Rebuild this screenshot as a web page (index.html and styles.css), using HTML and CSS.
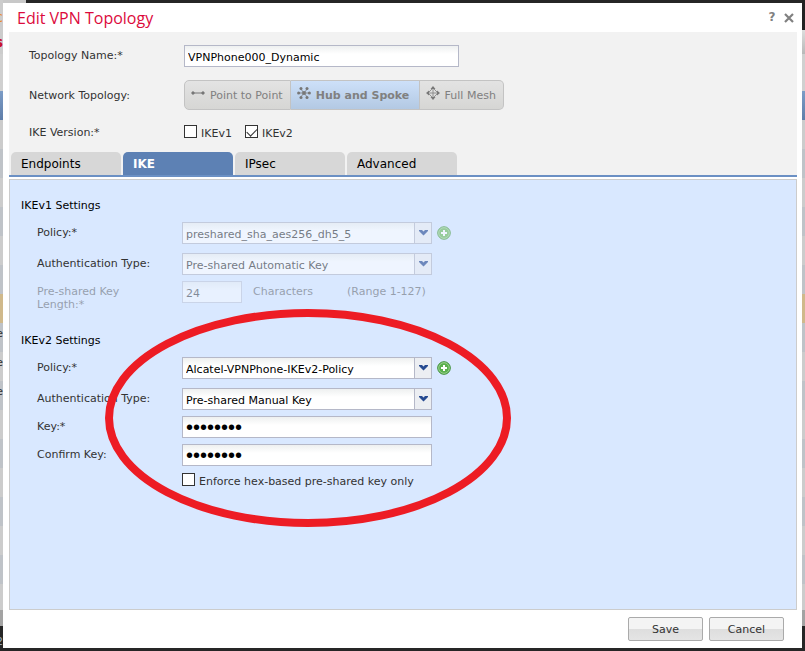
FILE: index.html
```html
<!DOCTYPE html>
<html lang="en">
<head>
<meta charset="utf-8">
<title>Edit VPN Topology</title>
<link rel="stylesheet" href="styles.css">
</head>
<body>
<div class="page">
  <div class="edge edge-left" aria-hidden="true">
    <div class="strip bar orange">c</div>
    <div class="strip sub crimson">s</div>
    <div class="strip blank"></div>
    <div class="strip head"></div>
    <div class="strip"></div>
    <div class="strip alt"></div>
    <div class="strip"></div>
    <div class="strip alt"></div>
    <div class="strip"></div>
    <div class="strip alt"></div>
    <div class="strip picked"></div>
    <div class="strip alt">e</div>
    <div class="strip">e</div>
    <div class="strip alt">e</div>
    <div class="strip"></div>
    <div class="strip alt"></div>
    <div class="strip"></div>
    <div class="strip alt"></div>
    <div class="strip"></div>
    <div class="strip alt"></div>
    <div class="strip last"></div>
    <div class="strip scroll"></div>
    <div class="strip foot">2</div>
  </div>

  <main class="dialog">
    <header class="titlebar">
      <h1>Edit VPN Topology</h1>
      <button class="tool" type="button" aria-label="Help">?</button>
      <button class="tool" type="button" aria-label="Close">
        <svg width="10" height="10" viewBox="0 0 10 10"><path d="M1 1L9 9M9 1L1 9" stroke="#808080" stroke-width="2.2"/></svg>
      </button>
    </header>

    <form class="content">
      <section class="general">
        <div class="general-row name-row">
          <label for="name">Topology Name:*</label>
          <input class="field name" id="name" type="text" value="VPNPhone000_Dynamic">
        </div>
        <div class="general-row network-row">
          <span>Network Topology:</span>
          <div class="segments">
            <button type="button" class="segment">
              <svg width="16" height="16" viewBox="0 0 16 16" fill="#777" stroke="#777"><path d="M3 8H13"/><circle cx="3" cy="8" r="1.2"/><circle cx="13" cy="8" r="1.2"/></svg>Point to Point
            </button>
            <button type="button" class="segment active" aria-pressed="true">
              <svg width="16" height="16" viewBox="0 0 16 16" fill="#777"><path d="M2 8H14M4 3L12 13M12 3L4 13" stroke="#777" stroke-width=".8"/><circle cx="8" cy="8" r="1.9"/><circle cx="2.6" cy="8" r="1.5"/><circle cx="13.4" cy="8" r="1.5"/><circle cx="5" cy="3.4" r="1.5"/><circle cx="11" cy="3.4" r="1.5"/><circle cx="5" cy="12.6" r="1.5"/><circle cx="11" cy="12.6" r="1.5"/></svg>Hub and Spoke
            </button>
            <button type="button" class="segment">
              <svg width="16" height="16" viewBox="0 0 16 16" fill="#777"><path d="M8 3L13 8L8 13L3 8ZM8 3V13M3 8H13" fill="none" stroke="#888" stroke-width=".9"/><path d="M8 1L10.500 4H5.500ZM8 15L10.500 12H5.500ZM1 8L4 5.500V10.500ZM15 8L12 5.500V10.500Z"/></svg>Full Mesh
            </button>
          </div>
        </div>
        <div class="general-row version-row">
          <span>IKE Version:*</span>
          <div class="checks">
            <label class="check"><input type="checkbox"><span>IKEv1</span></label>
            <label class="check"><input type="checkbox" checked><span>IKEv2</span></label>
          </div>
        </div>
      </section>

      <nav class="tabs" role="tablist">
        <button type="button" role="tab" class="tab">Endpoints</button>
        <button type="button" role="tab" class="tab current" aria-selected="true">IKE</button>
        <button type="button" role="tab" class="tab">IPsec</button>
        <button type="button" role="tab" class="tab">Advanced</button>
      </nav>

      <div class="panel">
        <section class="group">
          <h2>IKEv1 Settings</h2>
          <div class="row tall">
            <label for="policy1">Policy:*</label>
            <div class="combo dim">
              <select class="field" id="policy1" disabled><option>preshared_sha_aes256_dh5_5</option></select>
              <span class="trigger"><svg width="9" height="6" viewBox="0 0 9 6"><path d="M0 0H3L4.500 1.500L6 0H9V1L4.500 5.500L0 1Z" fill="#264a91"/></svg></span>
            </div>
            <button type="button" class="add dim" aria-label="Add IKEv1 policy" disabled>
              <svg width="14" height="14" viewBox="0 0 14 14"><circle cx="7" cy="7" r="6.300" fill="#6cba5c" stroke="#4a9a42"/><circle cx="7" cy="7" r="5.300" fill="none" stroke="#9bd18f"/><path d="M7 4V10M4 7H10" stroke="#fff" stroke-width="2"/></svg>
            </button>
          </div>
          <div class="row">
            <label for="auth1">Authentication Type:</label>
            <div class="combo dim">
              <select class="field" id="auth1" disabled><option>Pre-shared Automatic Key</option></select>
              <span class="trigger"><svg width="9" height="6" viewBox="0 0 9 6"><path d="M0 0H3L4.500 1.500L6 0H9V1L4.500 5.500L0 1Z" fill="#264a91"/></svg></span>
            </div>
          </div>
          <div class="row faint">
            <label for="length">Pre-shared Key Length:*</label>
            <input class="field length" id="length" type="text" value="24" disabled>
            <span class="unit">Characters</span>
            <span class="range">(Range 1-127)</span>
          </div>
        </section>

        <section class="group">
          <h2>IKEv2 Settings</h2>
          <div class="row tall">
            <label for="policy2">Policy:*</label>
            <div class="combo">
              <select class="field" id="policy2"><option>Alcatel-VPNPhone-IKEv2-Policy</option></select>
              <span class="trigger"><svg width="9" height="6" viewBox="0 0 9 6"><path d="M0 0H3L4.500 1.500L6 0H9V1L4.500 5.500L0 1Z" fill="#264a91"/></svg></span>
            </div>
            <button type="button" class="add" aria-label="Add IKEv2 policy">
              <svg width="14" height="14" viewBox="0 0 14 14"><circle cx="7" cy="7" r="6.300" fill="#5ab04e" stroke="#3d8e38"/><circle cx="7" cy="7" r="5.300" fill="none" stroke="#9bd18f"/><path d="M7 4V10M4 7H10" stroke="#fff" stroke-width="2"/></svg>
            </button>
          </div>
          <div class="row">
            <label for="auth2">Authentication Type:</label>
            <div class="combo">
              <select class="field" id="auth2"><option>Pre-shared Manual Key</option></select>
              <span class="trigger"><svg width="9" height="6" viewBox="0 0 9 6"><path d="M0 0H3L4.500 1.500L6 0H9V1L4.500 5.500L0 1Z" fill="#264a91"/></svg></span>
            </div>
          </div>
          <div class="row">
            <label for="key">Key:*</label>
            <input class="field key" id="key" type="password" value="password">
          </div>
          <div class="row">
            <label for="confirm">Confirm Key:</label>
            <input class="field key" id="confirm" type="password" value="password">
          </div>
          <div class="row">
            <label class="check enforce"><input type="checkbox"><span>Enforce hex-based pre-shared key only</span></label>
          </div>
        </section>
      </div>
    </form>

    <footer class="actions">
      <button type="button">Save</button>
      <button type="button">Cancel</button>
    </footer>

    <svg class="marker" width="406" height="218" viewBox="0 0 406 218" aria-hidden="true"><ellipse cx="203" cy="109" rx="199" ry="105" fill="none" stroke="#ed1c24" stroke-width="8"/></svg>
  </main>

  <div class="edge edge-right" aria-hidden="true">
    <div class="strip bar"></div>
    <div class="strip sub"></div>
    <div class="strip blank"></div>
    <div class="strip head"></div>
    <div class="strip"></div>
    <div class="strip alt"></div>
    <div class="strip"></div>
    <div class="strip alt"></div>
    <div class="strip"></div>
    <div class="strip alt"></div>
    <div class="strip picked"></div>
    <div class="strip alt"></div>
    <div class="strip"></div>
    <div class="strip alt"></div>
    <div class="strip"></div>
    <div class="strip alt"></div>
    <div class="strip"></div>
    <div class="strip alt"></div>
    <div class="strip"></div>
    <div class="strip alt"></div>
    <div class="strip last"></div>
    <div class="strip scroll"></div>
    <div class="strip foot"></div>
  </div>
</div>
</body>
</html>
```
FILE: styles.css
```css
* { box-sizing: border-box; }

body {
  margin: 0;
  color: #333;
  background: #262626;
  font: 11px/13px "DejaVu Sans", Verdana, sans-serif;
}

button, input, select { font: inherit; color: inherit; margin: 0; }
button { padding: 0; border: 0; background: none; }
svg { display: block; flex: none; }

.page {
  display: grid;
  grid-template-columns: 3px minmax(0, 1fr) 3px;
  min-height: 100vh;
  background: linear-gradient(#c8c8c8, #c8c8c8) 0 0 / 26px 3px no-repeat #262626;
}

/* Slivers of the page behind the dialog */
.edge { display: flex; flex-direction: column; overflow: hidden; }
.strip {
  display: flex;
  flex: none;
  align-items: center;
  justify-content: flex-end;
  height: 29px;
  padding-bottom: 8px;
  overflow: hidden;
  background: #ccc;
}
.alt { background: #bfc3c8; }
.bar { height: 30px; padding: 4px 0 0; }
.sub { height: 24px; padding: 0; font-weight: bold; font-size: 14px; }
.blank { height: 37px; background: #d0d0d0; }
.head { background: linear-gradient(#7c9cc6, #5f7ea9); }
.picked { background: #d0b98b; }
.orange { color: #e88a2a; font-size: 14px; }
.crimson { color: #c8102e; }
.last { height: 26px; }
.scroll { height: 16px; background: #a3a3a3; }
.foot { flex: 1 0 25px; padding: 6px 0 0; background: #262626; color: #9ab; }
.edge-right .bar { background: #222; }
.edge-right .sub { background: linear-gradient(#ddd, #b8b8b8); }

.dialog {
  position: relative;
  display: flex;
  flex-direction: column;
  margin: 3px 0;
  background: #fff;
}

.titlebar {
  display: flex;
  align-items: center;
  gap: 7px;
  height: 29px;
  padding: 0 8px 0 14px;
}
.titlebar h1 {
  flex: 1;
  margin: 0;
  color: #dc0a3c;
  font: 16px/20px "Open Sans", "Noto Sans", sans-serif;
}
.tool {
  display: grid;
  place-items: center;
  width: 10px;
  height: 16px;
  color: #808080;
  font-weight: bold;
  font-size: 12px;
}

.content { display: flex; flex: 1; flex-direction: column; margin: 0 5px 0 6px; }

.general { padding: 13px 20px 10px; background: #f2f2f2; }
.general-row {
  display: grid;
  grid-template-columns: 155px minmax(0, 1fr);
  align-items: center;
}
.name-row { height: 22px; }
.name-row label { padding-bottom: 2px; }
.network-row { height: 30px; margin: 13px 0 12px; }
.version-row { height: 20px; }

.field {
  height: 22px;
  padding: 2px 3px 0;
  border: 1px solid #b5b8c8;
  border-radius: 0;
  outline: 0;
  color: #000;
  background: linear-gradient(#eef0f0, #fff 8px);
}
.name { width: 275px; }

.segments { display: flex; width: 320px; height: 30px; }
.segment {
  display: flex;
  flex: 1 1 auto;
  align-items: center;
  gap: 4px;
  padding: 0 5px;
  border: 1px solid #c3c3c3;
  border-left-width: 0;
  color: #808080;
  background: linear-gradient(#e3e3e3, #d6d6d4);
  white-space: nowrap;
}
.segment svg { margin-bottom: 4px; }
.segment:first-child { border-left-width: 1px; border-radius: 5px 0 0 5px; }
.segment:last-child { border-radius: 0 5px 5px 0; }
.segment.active { flex-grow: 2; font-weight: bold; background: linear-gradient(#cde0f9, #b3c9e3); }

.checks { display: flex; gap: 13px; }
.check { display: flex; gap: 4px; }
.check span { padding-top: 2px; }
.check input {
  flex: none;
  appearance: none;
  width: 13px;
  height: 13px;
  border: 1px solid #333;
  background: #fff;
}
.check input:checked::after {
  content: "";
  display: block;
  width: 9px;
  height: 5px;
  margin: 2px 0 0 1px;
  border: solid #333;
  border-width: 0 0 1px 1px;
  transform: rotate(-45deg);
}

.tabs {
  display: flex;
  gap: 2px;
  padding: 0 2px;
  border-bottom: 2px solid #6b90c4;
  background: #f2f2f2;
}
.tab {
  width: 110px;
  height: 23px;
  padding: 2px 10px 0;
  border-radius: 5px 5px 0 0;
  color: #000;
  background: #d7d7d7;
  font-size: 12px;
  text-align: left;
}
.tab.current { color: #fff; background: #5d81b4; font-weight: bold; }

.panel {
  flex: 1;
  margin-top: 2px;
  padding: 19px 11px;
  border: 1px solid #ccc;
  background: #d9e8ff;
}
.group + .group { margin-top: 31px; }
.group h2 { margin: 0 0 10px; color: #000; font: inherit; }
.row {
  display: flex;
  align-items: flex-start;
  height: 22px;
  margin: 0 0 6px 16px;
}
.row.tall { margin-bottom: 9px; }
.row > label:first-child:not(.check) { width: 145px; padding: 4px 40px 0 0; white-space: nowrap; }
.row.faint > label:first-child { white-space: normal; }
.faint { opacity: .4; }
.dim { opacity: .6; }

.combo { position: relative; width: 250px; }
.combo select { display: block; width: 100%; appearance: none; padding-right: 20px; opacity: 1; }
.combo.dim select { color: #333; }
.trigger {
  position: absolute;
  inset: 1px 1px 1px auto;
  display: grid;
  place-items: center;
  width: 17px;
  border-left: 1px solid #b5b8c8;
  background: #eceef2;
  pointer-events: none;
}
.add { align-self: center; margin-left: 5px; }
.key { width: 250px; padding: 1px 3px 0; font: 20px/20px "Liberation Sans", sans-serif; }
.length { width: 60px; }
.unit { width: 95px; padding: 4px 0 0 11px; }
.range { padding: 4px 0 0 10px; }
.enforce { margin: 1px 0 0 145px; }

.actions { display: flex; justify-content: flex-end; gap: 6px; padding: 7px 18px 7px; }
.actions button {
  width: 75px;
  height: 24px;
  border: 1px solid #aaa;
  border-radius: 2px;
  background: linear-gradient(#f4f4f4 0 50%, #dedede 50%, #e4e4e4);
}

/* Hand-drawn highlight round the IKEv2 fields */
.marker { position: absolute; left: 102px; top: 306px; pointer-events: none; }
```
